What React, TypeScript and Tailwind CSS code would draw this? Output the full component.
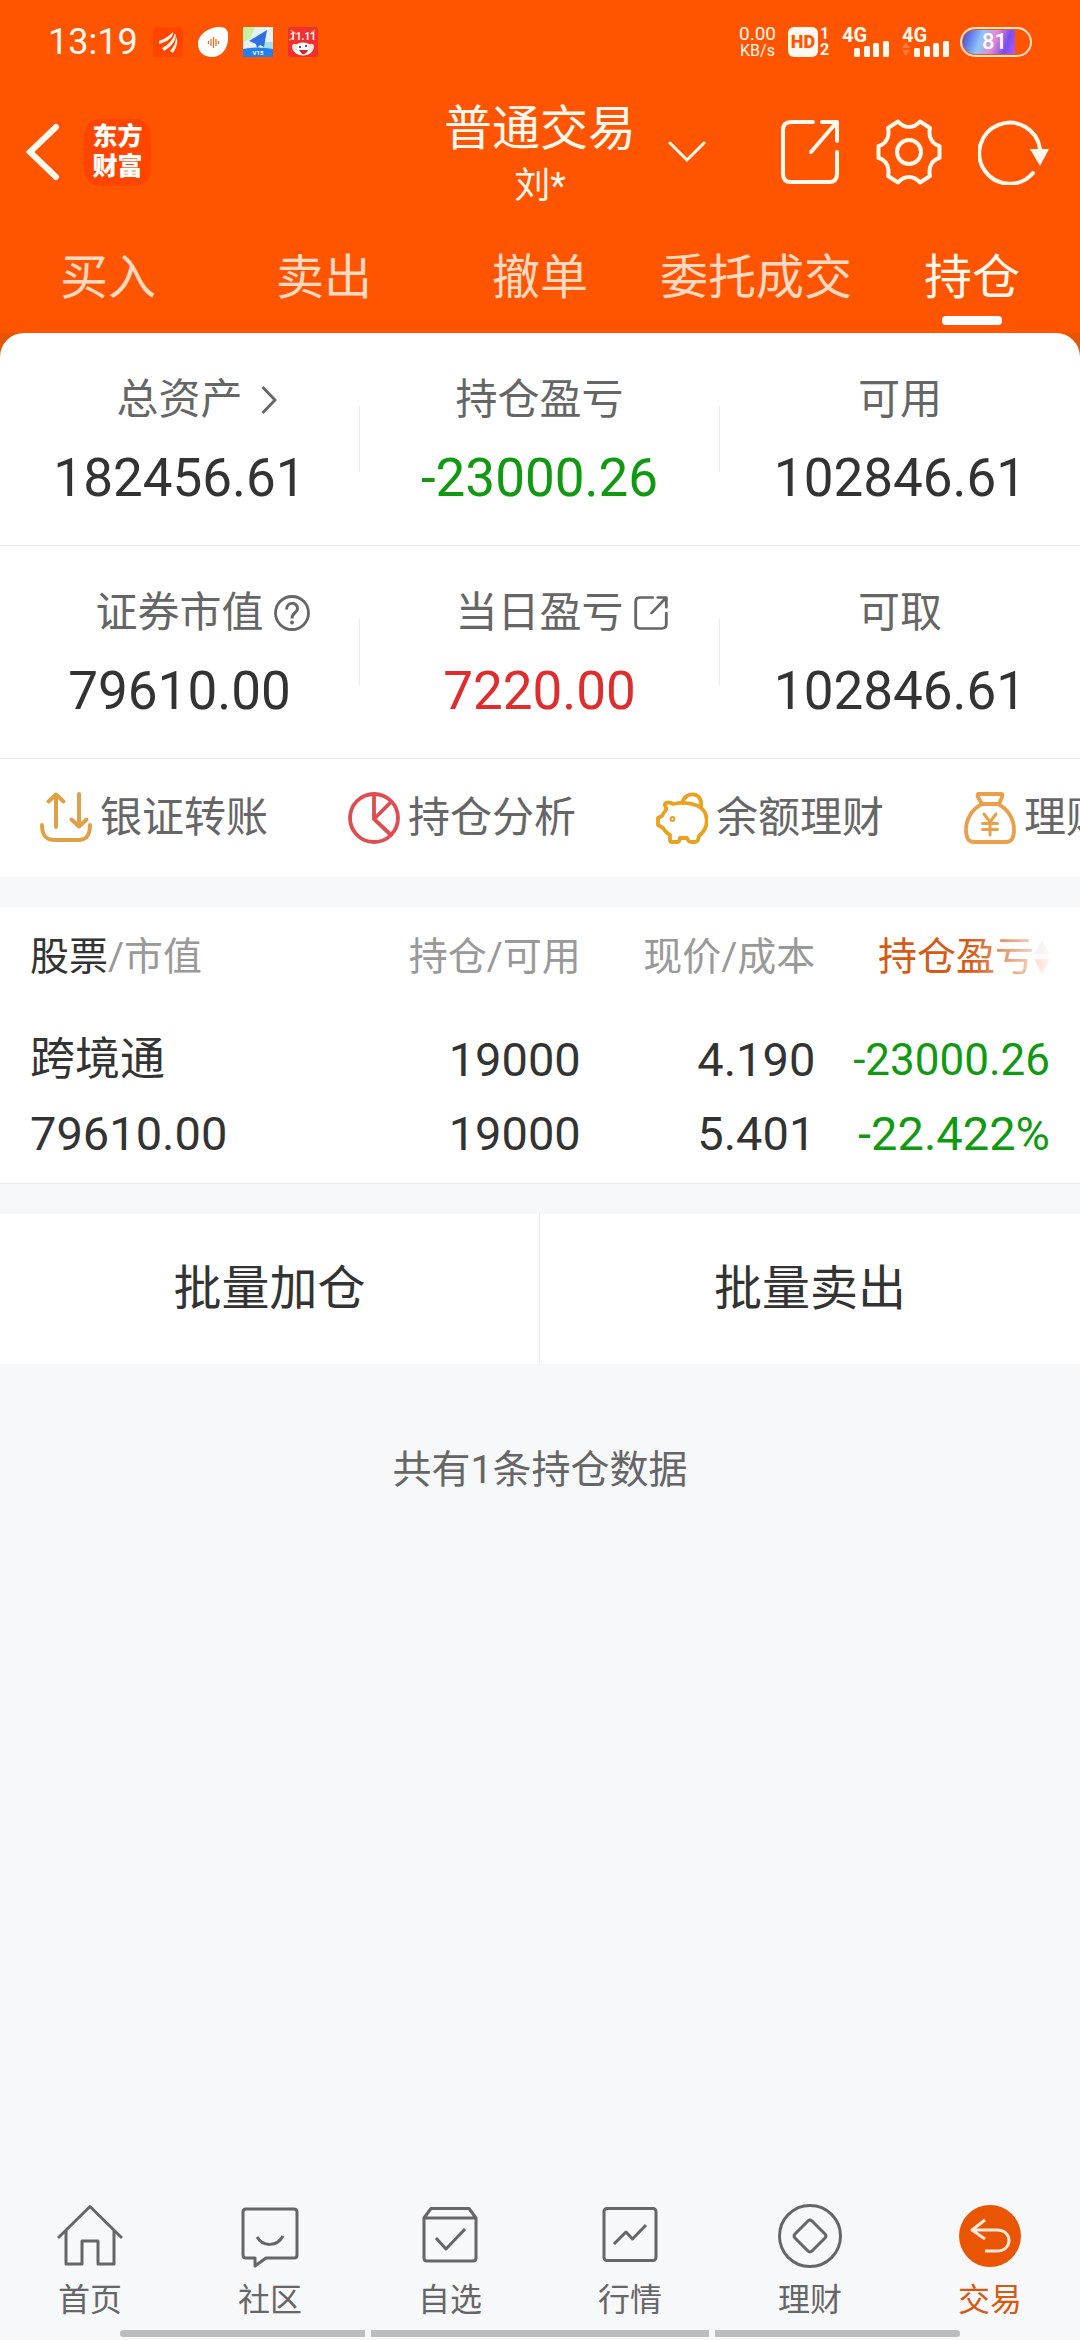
import React from "react";

const tabs = ["买入", "卖出", "撤单", "委托成交", "持仓"];

const ShareIcon = ({ className, stroke }: { className: string; stroke: number }) => (
  <svg
    viewBox="0 0 60 66"
    preserveAspectRatio="none"
    className={className}
    fill="none"
    stroke="currentColor"
    strokeWidth={stroke}
    strokeLinecap="round"
    strokeLinejoin="round"
    aria-hidden="true"
  >
    <path d="M33 3H11Q3 3 3 11V55Q3 63 11 63H49Q57 63 57 55V33" />
    <path d="M31 33 56 4M42 3H57V22" />
  </svg>
);

const HelpIcon = () => (
  <svg viewBox="0 0 36 36" className="size-9" fill="none" stroke="currentColor" strokeWidth="2.800" aria-hidden="true">
    <circle cx="18" cy="18" r="16.500" />
    <path d="M12.500 14.500C12.500 6.500 23.500 6.500 23.500 13.500C23.500 18 18 17.500 18 23.500" strokeWidth="3" />
    <circle cx="18" cy="27.500" r="1.200" fill="currentColor" strokeWidth="1.500" />
  </svg>
);

type Stat = { label: string; value: string; color: string; icon?: React.ReactNode };

const stats: Stat[][] = [
  [
    {
      label: "总资产",
      value: "182456.61",
      color: "text-[#333333]",
      icon: (
        <svg viewBox="0 0 16 28" className="ml-2 h-7 w-4" fill="none" stroke="currentColor" strokeWidth="2.800" aria-hidden="true">
          <path d="M1.500 1 14 14 1.500 27" />
        </svg>
      ),
    },
    { label: "持仓盈亏", value: "-23000.26", color: "text-[#119a11]" },
    { label: "可用", value: "102846.61", color: "text-[#333333]" },
  ],
  [
    { label: "证券市值", value: "79610.00", color: "text-[#333333]", icon: <HelpIcon /> },
    {
      label: "当日盈亏",
      value: "7220.00",
      color: "text-[#e02c2c]",
      icon: <ShareIcon className="h-[34px] w-[34px]" stroke={5} />,
    },
    { label: "可取", value: "102846.61", color: "text-[#333333]" },
  ],
];

const actions = [
  {
    label: "银证转账",
    icon: (
      <g stroke="#e2a046" strokeWidth="4">
        <path d="M2 33C2 44 6 48 15 48H38C46 48 50 44 50 33" />
        <path d="M16 35V3M8.500 9.500 16 2.500 23.500 9.500" />
        <path d="M39 2V34M31.500 27.500 39 34.500 46.500 27.500" />
      </g>
    ),
  },
  {
    label: "持仓分析",
    icon: (
      <g stroke="#e04c4f" strokeWidth="3.800">
        <circle cx="26" cy="26" r="24" />
        <path d="M26 2V27M26 27 43 10M26 27 43 43" />
      </g>
    ),
  },
  {
    label: "余额理财",
    icon: (
      <g stroke="#e9a21f" strokeWidth="3.800">
        <path d="M17 12C14 10 10 10 9 12C8 14 11 15 10 18C8 20 7 22 6 24L2 26V33L7 36C9 39 12 42 14 43V48Q14 50 16 50H21Q23 50 23.500 48L24 46H31L32 48Q33 50 35 50H39Q41 50 42 48L43 44C55 34 52 18 41 13.500C34 10.500 24 10.500 17 12Z" />
        <path d="M26.500 10.500C29-1 47-1 45 14.500" />
        <circle cx="16.500" cy="27" r="1" />
      </g>
    ),
  },
  {
    label: "理财",
    icon: (
      <g stroke="#eaa04a" strokeWidth="3.800">
        <path d="M14 2H38Q39 3 38 5L35 12H18L14 5Q13 3 14 2Z" />
        <path d="M18 12C8 17 2 27 2 38Q2 50 10 50H42Q50 50 50 38C50 27 44 17 34 12" />
        <path d="M20 22 26 30 32 22M26 30V43M18.500 31.500H33.500M18.500 37.500H33.500" strokeWidth="3" />
      </g>
    ),
  },
];

const navItems = [
  {
    label: "首页",
    icon: <path d="M1 34 33 2.500 65 34M9 27V60H25V37H41V60H57V27" />,
  },
  {
    label: "社区",
    icon: (
      <>
        <path d="M9 5H57Q60 5 60 8V51Q60 54 57 54H29L18 62V54H9Q6 54 6 51V8Q6 5 9 5Z" />
        <path d="M20 33C26 43 40 43 46 32" />
      </>
    ),
  },
  {
    label: "自选",
    icon: (
      <>
        <path d="M7 14 14 4.500H52L59 14V54Q59 57 56 57H10Q7 57 7 54ZM7 14H59" />
        <path d="M19 34 29 45 48 25" />
      </>
    ),
  },
  {
    label: "行情",
    icon: (
      <>
        <rect x="7" y="4.500" width="52" height="52" rx="3" />
        <path d="M17 40 29 28 35.500 35 49 21" />
      </>
    ),
  },
  {
    label: "理财",
    icon: (
      <>
        <circle cx="33" cy="32" r="30.500" />
        <path d="M31 17Q33 15 35 17L48 30Q50 32 48 34L35 47Q33 49 31 47L18 34Q16 32 18 30Z" />
      </>
    ),
  },
  {
    label: "交易",
    active: true,
    icon: (
      <>
        <circle cx="33" cy="32" r="31" fill="#ea5504" stroke="none" />
        <path d="M28 16 15 26 28 35M16 26H40C56 26 56 47 40 47H28" stroke="#ffeadb" strokeWidth="3" />
      </>
    ),
  },
];

const Signal = ({ data }: { data?: boolean }) => (
  <div className="h-[30px] w-12">
    <div className="h-4 text-[20px] font-bold leading-4">4G</div>
    <svg viewBox="0 0 48 16" className="-mt-0.5 h-4 w-12" fill="currentColor" aria-hidden="true">
      {data && <path d="M0 7 4 1 8 7ZM0 9H8L4 15Z" fill="#ff7b3a" />}
      <rect x="12" y="7" width="6" height="9" rx="1.500" />
      <rect x="22" y="5" width="6" height="11" rx="1.500" />
      <rect x="31" y="2" width="6" height="14" rx="1.500" />
      <rect x="41" y="0" width="6" height="16" rx="1.500" />
    </svg>
  </div>
);

const StatusBar = () => (
  <div className="flex h-[84px] items-center justify-between px-12 text-[#fff8ee]">
    <div className="flex items-center gap-[15px]">
      <span className="text-[36px] leading-[38px]">13:19</span>
      <svg viewBox="0 0 30 30" className="size-[30px]" aria-hidden="true">
        <rect width="30" height="30" rx="3" fill="#ff4500" />
        <path d="M6 14C12 12 16 9 20 5C21 9 15 15 6 17ZM9 21C15 18 20 13 22 6C25 12 18 20 11 24ZM17 24C21 20 23 15 23 10C26 15 23 21 20 26Z" fill="#fff3e6" />
      </svg>
      <svg viewBox="0 0 30 30" className="size-[30px]" aria-hidden="true">
        <path d="M0 17C0 8 10 0 22 0Q30 0 30 8C31 21 24 30 14 30C6 30 0 25 0 17Z" fill="#fff" />
        <path d="M10.500 14V17M13 12V19M15.500 10V21M18 12V19M20.500 14V17" stroke="#e8702e" strokeWidth="1.300" />
      </svg>
      <svg viewBox="0 0 30 30" className="size-[30px]" aria-hidden="true">
        <rect width="30" height="30" fill="#e6f3f5" />
        <path d="M0 0H12L7 12 0 15Z" fill="#c6f0a6" />
        <path d="M20 15H30V22H20Z" fill="#9fe0f7" />
        <path d="M24 3 6 14 13 17 14 21 17 18 21 20Z" fill="#2f6fe0" />
        <path d="M0 22Q15 19 30 22V30H0Z" fill="#2680ea" />
        <text x="15" y="28" fontSize="6" fontWeight="700" fill="#fff" textAnchor="middle">V15</text>
      </svg>
      <svg viewBox="0 0 30 30" className="size-[30px]" aria-hidden="true">
        <rect width="30" height="30" rx="3" fill="#f0302f" />
        <path d="M3 3 8 7M27 3 22 7M1 13 5 11" stroke="#ffb03a" strokeWidth="1.500" />
        <text x="15" y="13" fontSize="10" fontWeight="700" fill="#fff" textAnchor="middle">11.11</text>
        <ellipse cx="15" cy="22" rx="10" ry="6.500" fill="#fff" />
        <path d="M4 20C4 16 8 16 9 19V23C6 25 4 23 4 20ZM26 20C26 16 22 16 21 19V23C24 25 26 23 26 20Z" fill="#ffe4e0" />
        <circle cx="12" cy="20" r="1" fill="#222" />
        <circle cx="18" cy="19" r="1" fill="#222" />
        <path d="M11 23H20Q18 28 14 27Z" fill="#d22a2a" />
      </svg>
    </div>
    <div className="flex items-center gap-3">
      <div className="text-center">
        <div className="text-[19px] leading-[17px]">0.00</div>
        <div className="text-[16px] leading-[17px]">KB/s</div>
      </div>
      <div className="flex items-center gap-0.5">
        <div className="flex size-[30px] items-center justify-center rounded-[6px] bg-[#fff8ee] text-[18px] font-black leading-none text-[#ff5500]">
          HD
        </div>
        <div className="w-2.5 text-[16px] font-bold leading-4">
          <div>1</div>
          <div>2</div>
        </div>
      </div>
      <Signal />
      <Signal data />
      <div className="-ml-0.5 flex h-[30px] w-[72px] rounded-full border-2 border-[#ffe6cf] p-px">
        <div className="flex w-[52px] items-center justify-end rounded-l-full bg-[linear-gradient(110deg,#4a55e0_5%,#8fc6fa_35%,#e58ad6_58%,#7a4df0_80%,#b05cf0)] pr-2 text-[22px] font-medium leading-none text-white">
          81
        </div>
      </div>
    </div>
  </div>
);

const Header = () => (
  <header className="bg-[#ff5500] text-[#fff8ee]">
    <StatusBar />
    <div className="grid h-[136px] grid-cols-[1fr_auto_1fr] items-center">
      <div className="flex items-center gap-6 pl-6">
        <button type="button" aria-label="返回">
          <svg viewBox="0 0 36 58" className="h-[58px] w-9" fill="none" stroke="currentColor" strokeWidth="6" strokeLinecap="round" aria-hidden="true">
            <path d="M32 4 6 29 32 54" />
          </svg>
        </button>
        <div className="flex h-[67px] w-[67px] items-center justify-center rounded-2xl bg-[#ff4500] text-center text-[25px] font-black leading-[30px] text-white">
          东方
          <br />
          财富
        </div>
      </div>
      <div className="pt-2 text-center">
        <h1 className="text-[48px] leading-[60px]">普通交易</h1>
        <p className="text-[36px] leading-[54px]">刘*</p>
      </div>
      <div className="flex items-center justify-between pl-8 pr-[30px]">
        <button type="button" aria-label="切换账户">
          <svg viewBox="0 0 38 22" className="h-[22px] w-[38px]" fill="none" stroke="currentColor" strokeWidth="3" strokeLinecap="round" aria-hidden="true">
            <path d="M2 2 19 19 36 2" />
          </svg>
        </button>
        <div className="flex items-center gap-9">
          <button type="button" aria-label="分享">
            <ShareIcon className="h-[66px] w-[60px]" stroke={4} />
          </button>
          <button type="button" aria-label="设置">
            <svg viewBox="0 0 66 66" className="size-[66px]" fill="none" stroke="currentColor" strokeWidth="4" strokeLinejoin="round" aria-hidden="true">
              <path d="M22 2.500C25 6 28 8 33 8S41 6 44 2.500L54 9C52 18 56 25 63.500 27V39C56 41 52 48 54 57L44 63.500C41 60 38 58 33 58S25 60 22 63.500L12 57C14 48 10 41 2.500 39V27C10 25 14 18 12 9Z" />
              <circle cx="33" cy="33" r="12" />
            </svg>
          </button>
          <button type="button" aria-label="刷新">
            <svg viewBox="0 0 72 66" className="h-[66px] w-[72px]" fill="none" stroke="currentColor" strokeWidth="4" strokeLinecap="round" aria-hidden="true">
              <path d="M55 54A30.500 30.500 0 1 1 62 30" />
              <path d="M52 30H71L62 47Z" fill="currentColor" stroke="none" />
            </svg>
          </button>
        </div>
      </div>
    </div>
    <nav className="grid grid-cols-5 pb-2">
      {tabs.map((tab) => {
        const active = tab === "持仓";
        return (
          <a
            key={tab}
            href="#"
            className={`flex flex-col items-center pt-7 text-[48px] leading-[60px] ${active ? "text-[#fff8ee]" : "text-[#ffd9c2]"}`}
          >
            {tab}
            <span className={`mt-2 h-[9px] w-[60px] rounded-[4px] ${active ? "bg-white" : ""}`} />
          </a>
        );
      })}
    </nav>
  </header>
);

const Summary = () => (
  <div className="bg-[#e85500]">
    <section className="rounded-t-3xl bg-white">
      {stats.map((row, index) => (
        <div key={index} className="grid grid-cols-3 border-b border-[#ececec]">
          {row.map((stat, i) => (
            <div key={stat.label} className="flex items-center justify-between">
              <div className="min-w-0 flex-1 pb-[35px] pt-[42px] text-center">
                <div className="grid grid-cols-[1fr_auto_1fr] items-center text-[42px] leading-[50px] text-[#666666]">
                  <span />
                  <span>{stat.label}</span>
                  <span className="flex pl-2.5">{stat.icon}</span>
                </div>
                <p className={`mt-[21px] text-[53px] leading-16 ${stat.color}`}>{stat.value}</p>
              </div>
              {i < 2 && <div className="h-[66px] w-px bg-[#e9e9e9]" />}
            </div>
          ))}
        </div>
      ))}
      <div className="flex h-[118px] items-center gap-20 overflow-hidden pl-10">
        {actions.map((action) => (
          <button key={action.label} type="button" className="flex shrink-0 items-center gap-2 text-[42px] leading-[50px] text-[#666666]">
            <svg viewBox="0 0 52 52" className="size-[52px]" fill="none" strokeLinecap="round" strokeLinejoin="round" aria-hidden="true">
              {action.icon}
            </svg>
            {action.label}
          </button>
        ))}
      </div>
    </section>
  </div>
);

const Holdings = () => (
  <section className="mt-[30px] border-b border-[#ebebeb] bg-white px-[30px] pb-3">
    <table className="w-full table-fixed text-right text-[#333333]">
      <thead>
        <tr className="h-[100px] text-[39px] leading-[48px] text-[#999999]">
          <th className="w-[27%] text-left font-normal">
            <span className="text-[#333333]">股票</span>/市值
          </th>
          <th className="w-[27%] font-normal">持仓/可用</th>
          <th className="w-[23%] font-normal">现价/成本</th>
          <th className="w-[23%] font-normal">
            <div className="relative flex items-center justify-end text-[#d75a14]">
              持仓盈亏
              <svg viewBox="0 0 16 36" className="h-9 w-4" aria-hidden="true">
                <path d="M0 15 8 1 16 15Z" fill="#cccccc" />
                <path d="M0 20H16L8 35Z" fill="#ff8a5c" />
              </svg>
              <span className="absolute inset-y-0 right-0 w-20 bg-gradient-to-r from-transparent to-white/90" />
            </div>
          </th>
        </tr>
      </thead>
      <tbody>
        <tr className="text-[47px] leading-[74px]">
          <td className="pt-4 text-left">
            <div className="text-[45px]">跨境通</div>
            <div>79610.00</div>
          </td>
          <td className="pt-4">
            <div>19000</div>
            <div>19000</div>
          </td>
          <td className="pt-4">
            <div>4.190</div>
            <div>5.401</div>
          </td>
          <td className="pt-4 text-[#119a11]">
            <div className="text-[44px]">-23000.26</div>
            <div>-22.422%</div>
          </td>
        </tr>
      </tbody>
    </table>
  </section>
);

const BottomNav = () => (
  <footer className="mt-auto">
    <nav className="grid grid-cols-6">
      {navItems.map((item) => (
        <a
          key={item.label}
          href="#"
          className={`flex flex-col items-center text-[32px] leading-10 ${item.active ? "text-[#d75a14]" : "text-[#666666]"}`}
        >
          <svg viewBox="0 0 66 64" className="h-16 w-[66px]" fill="none" stroke="currentColor" strokeWidth="3" strokeLinejoin="round" aria-hidden="true">
            {item.icon}
          </svg>
          <span className="mt-3">{item.label}</span>
        </a>
      ))}
    </nav>
    <div className="mb-[3px] mt-2.5 flex gap-1.5 px-[120px]">
      <div className="h-[7px] flex-[245] rounded-l-full bg-[#bcbcbc]" />
      <div className="h-[7px] flex-[338] bg-[#bcbcbc]" />
      <div className="h-[7px] flex-[245] rounded-r-full bg-[#bcbcbc]" />
    </div>
  </footer>
);

const App: React.FC = () => {
  return (
    <div className="flex min-h-screen flex-col overflow-hidden bg-[#f7f8fa] font-['Roboto','Noto_Sans_CJK_SC',sans-serif]">
      <Header />
      <main>
        <Summary />
        <Holdings />
        <div className="mt-[30px] grid grid-cols-2 bg-white text-[48px] leading-[150px] text-[#333333]">
          <button type="button" className="border-r border-[#ececec]">
            批量加仓
          </button>
          <button type="button">批量卖出</button>
        </div>
        <p className="mt-20 text-center text-[39px] leading-[52px] text-[#666666]">共有1条持仓数据</p>
      </main>
      <BottomNav />
    </div>
  );
};

export default App;
